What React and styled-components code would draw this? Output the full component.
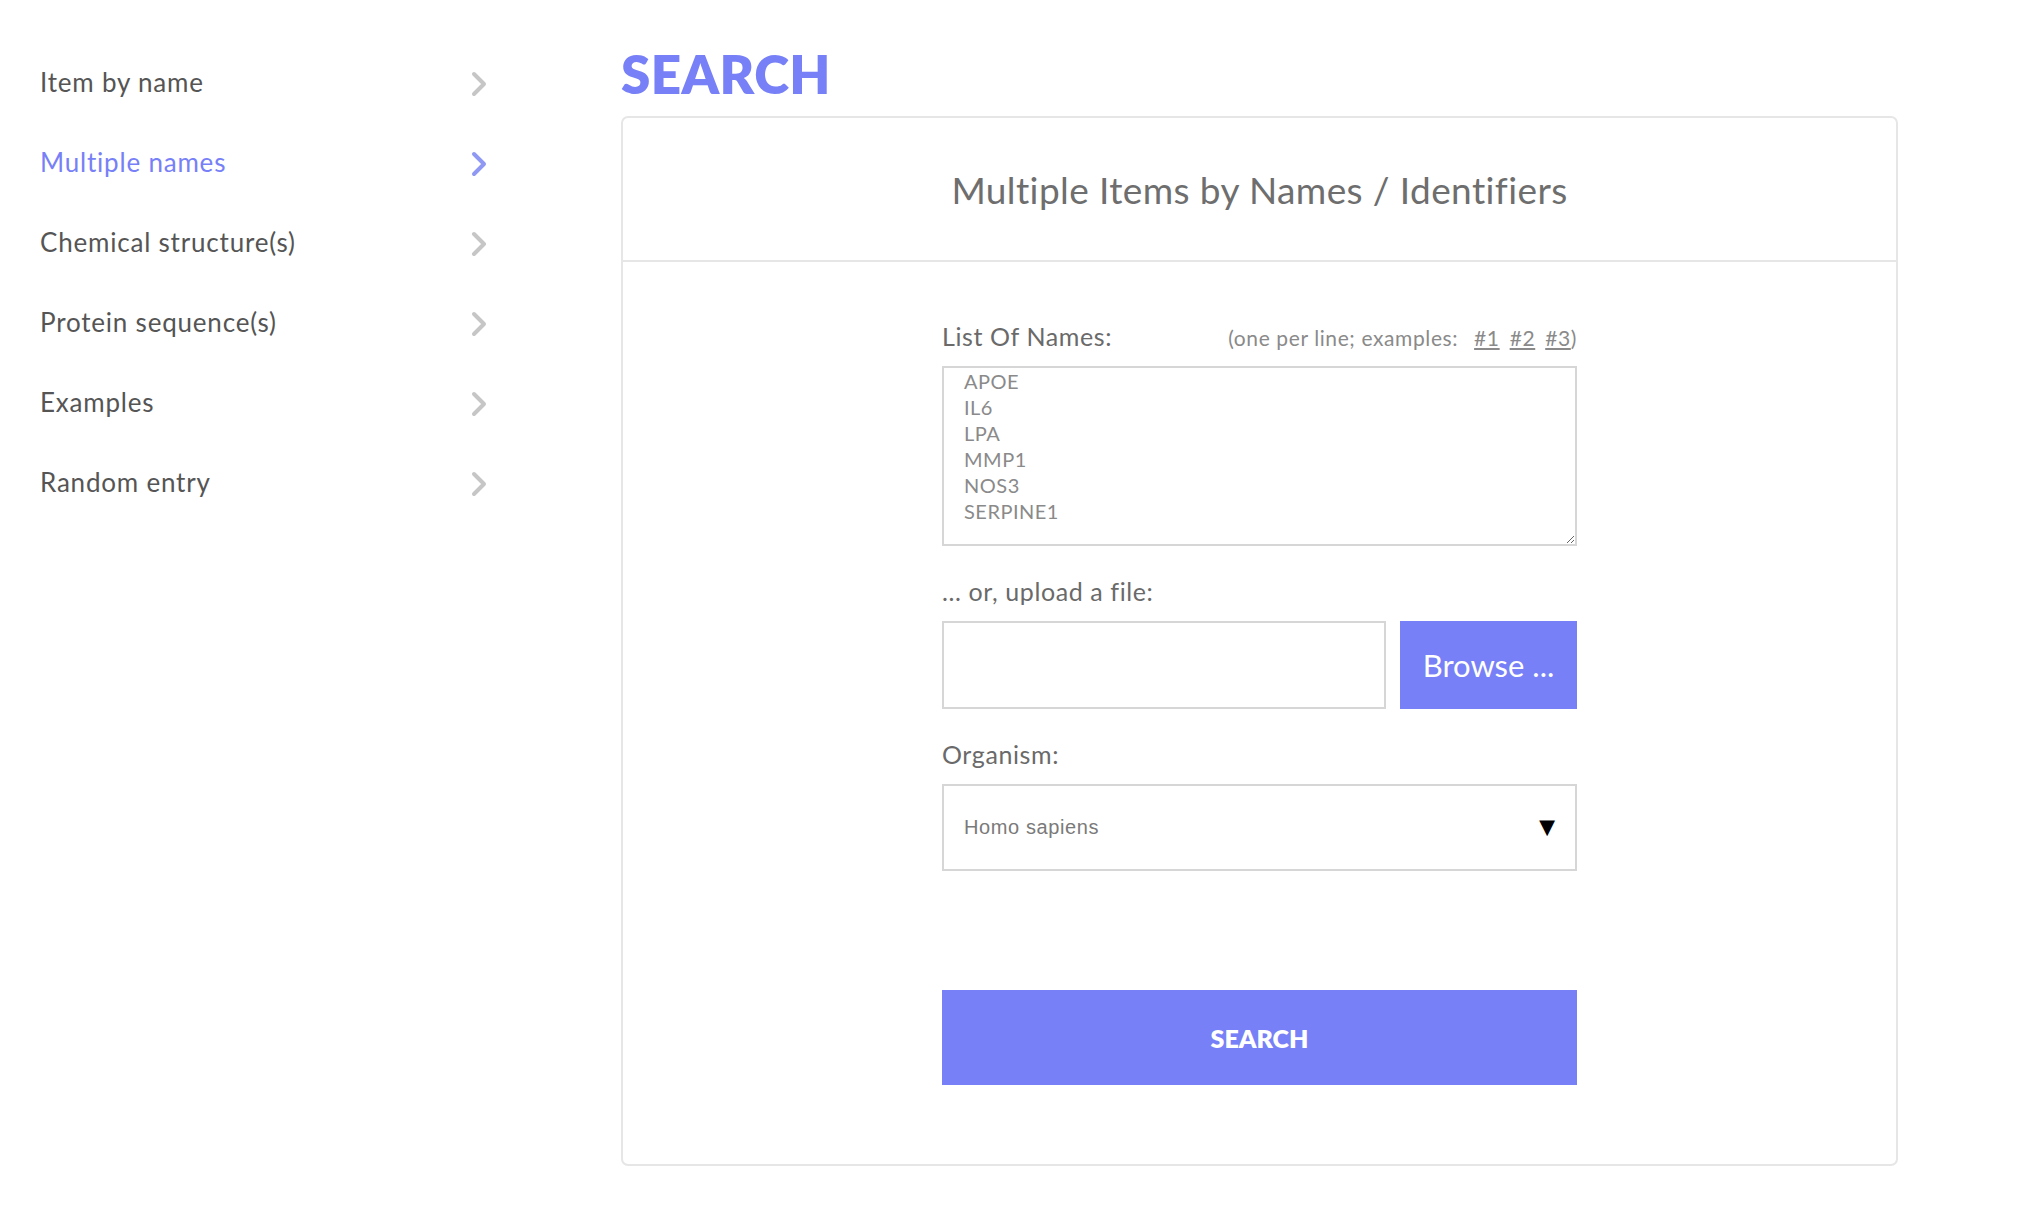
import { createGlobalStyle } from "styled-components";
import styled from "styled-components";

const BLUE = "#7780f7";

const GlobalStyle = createGlobalStyle`
    html, body {
        margin: 0;
        padding: 0;
        background: #ffffff;
        font-family: Lato, "Open Sans", sans-serif;
    }
`;

//page: sidebar + main column
const Page = styled.div`
    display: flex;
    align-items: flex-start;
    width: 2042px;
    min-height: 1224px;
`;

const Sidebar = styled.nav`
    width: 447px;
    padding: 42px 0 0 40px;
    margin-right: 134px;
    display: flex;
    flex-direction: column;
`;

const NavItem = styled.a`
    height: 80px;
    display: flex;
    align-items: center;
    justify-content: space-between;
    font-size: 26px;
    letter-spacing: 0.8px;
    color: ${(p) => (p.$active ? BLUE : "#555555")};
    text-decoration: none;
    cursor: pointer;

    svg {
        margin-top: 4px;
    }
`;

const Main = styled.main`
    width: 1277px;
    padding-top: 45px;
`;

const Heading = styled.h1`
    margin: 0 0 14px 0;
    font-size: 53px;
    line-height: 57px;
    font-weight: 800;
    color: ${BLUE};
    letter-spacing: 0.4px;
`;

const Card = styled.section`
    border: 2px solid #e6e6e6;
    border-radius: 7px;
    height: 1050px;
    box-sizing: border-box;
`;

const CardHeader = styled.header`
    height: 142px;
    border-bottom: 2px solid #e6e6e6;
    display: flex;
    align-items: center;
    justify-content: center;
`;

const CardTitle = styled.h2`
    margin: 0;
    font-size: 37px;
    font-weight: 400;
    color: #6e6e6e;
    letter-spacing: 0.4px;
`;

const Form = styled.form`
    width: 635px;
    margin: 0 auto;
    padding-top: 58px;
    display: flex;
    flex-direction: column;
`;

const LabelRow = styled.div`
    display: flex;
    align-items: baseline;
    justify-content: space-between;
    margin-top: ${(p) => p.$gap || 0}px;
    margin-bottom: 14px;
`;

const Label = styled.label`
    font-size: 25px;
    line-height: 32px;
    letter-spacing: 0.6px;
    color: #6a6a6a;
`;

const Hint = styled.span`
    font-size: 21px;
    letter-spacing: 0.6px;
    color: #8a8a8a;

    a {
        color: #8a8a8a;
        text-decoration: underline;
        margin-left: 10px;
    }
`;

const NameList = styled.textarea`
    height: 180px;
    box-sizing: border-box;
    border: 2px solid #d6d6d6;
    padding: 0 20px;
    font-family: Lato, sans-serif;
    font-size: 20px;
    line-height: 26px;
    letter-spacing: 0.5px;
    color: #8a8a8a;
    resize: vertical;
    outline: none;
`;

const FileRow = styled.div`
    display: flex;
    gap: 14px;
    height: 88px;
`;

const FileBox = styled.div`
    flex: 1;
    border: 2px solid #d6d6d6;
`;

const BrowseButton = styled.button`
    width: 177px;
    border: none;
    background: ${BLUE};
    color: #ffffff;
    font-family: Lato, sans-serif;
    font-size: 31px;
    cursor: pointer;
`;

const SelectBox = styled.div`
    height: 87px;
    box-sizing: border-box;
    border: 2px solid #d6d6d6;
    display: flex;
    align-items: center;
    justify-content: space-between;
    padding: 0 14px 0 20px;
    font-family: "Liberation Sans", Arial, sans-serif;
    font-size: 20px;
    color: #7a7a7a;
    letter-spacing: 0.6px;
`;

const Caret = styled.span`
    color: #000000;
    font-size: 27px;
    line-height: 1;
`;

const SubmitButton = styled.button`
    margin-top: 119px;
    height: 95px;
    border: none;
    background: ${BLUE};
    color: #ffffff;
    font-family: Lato, sans-serif;
    font-weight: 800;
    font-size: 25px;
    cursor: pointer;
`;

function Chevron({ active }) {
    return (
        <svg width="16" height="26" viewBox="0 0 16 26">
            <polyline
                points="3,3 13,13 3,23"
                fill="none"
                stroke={active ? "#8f98f2" : "#c6c6c6"}
                strokeWidth="4"
                strokeLinecap="round"
                strokeLinejoin="round"
            />
        </svg>
    );
}

const navItems = [
    "Item by name",
    "Multiple names",
    "Chemical structure(s)",
    "Protein sequence(s)",
    "Examples",
    "Random entry",
];

const names = "APOE\nIL6\nLPA\nMMP1\nNOS3\nSERPINE1";

function App() {
    return (
        <>
            <GlobalStyle />
            <Page>
                {/* SIDEBAR */}
                <Sidebar>
                    {navItems.map((item, i) => (
                        <NavItem key={item} $active={i === 1}>
                            {item}
                            <Chevron active={i === 1} />
                        </NavItem>
                    ))}
                </Sidebar>
                {/* MAIN */}
                <Main>
                    <Heading>SEARCH</Heading>
                    <Card>
                        <CardHeader>
                            <CardTitle>Multiple Items by Names / Identifiers</CardTitle>
                        </CardHeader>
                        <Form onSubmit={(e) => e.preventDefault()}>
                            <LabelRow>
                                <Label>List Of Names:</Label>
                                <Hint>
                                    (one per line; examples: <a>#1</a>
                                    <a>#2</a>
                                    <a>#3</a>)
                                </Hint>
                            </LabelRow>
                            <NameList defaultValue={names} />
                            <LabelRow $gap={29}>
                                <Label>... or, upload a file:</Label>
                            </LabelRow>
                            <FileRow>
                                <FileBox />
                                <BrowseButton type="button">Browse ...</BrowseButton>
                            </FileRow>
                            <LabelRow $gap={29}>
                                <Label>Organism:</Label>
                            </LabelRow>
                            <SelectBox>
                                Homo sapiens
                                <Caret>▼</Caret>
                            </SelectBox>
                            <SubmitButton type="submit">SEARCH</SubmitButton>
                        </Form>
                    </Card>
                </Main>
            </Page>
        </>
    );
}
export default App;
